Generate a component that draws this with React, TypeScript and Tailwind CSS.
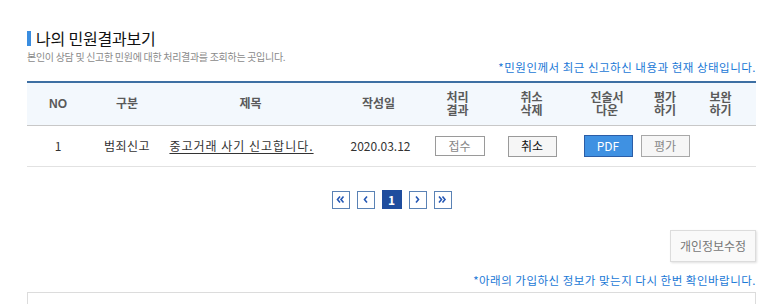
const font = { fontFamily: '"Noto Sans CJK KR", "Noto Sans", sans-serif' };
const headFont = { fontFamily: '"Liberation Sans", "Noto Sans CJK KR", sans-serif' };

type Col = { label: string[] };

const cols: Col[] = [
    { label: ['NO'] },
    { label: ['구분'] },
    { label: ['제목'] },
    { label: ['작성일'] },
    { label: ['처리', '결과'] },
    { label: ['취소', '삭제'] },
    { label: ['진술서', '다운'] },
    { label: ['평가', '하기'] },
    { label: ['보완', '하기'] },
];

const gridCols = 'grid grid-cols-[62px_76px_171px_85px_73px_75px_76px_40px_71px]';

const Chevron = ({ dir, double }: { dir: 'l' | 'r'; double?: boolean }) => {
    const one = dir === 'l' ? 'M5 1.5 L2.5 4.5 L5 7.5' : 'M2 1.5 L4.5 4.5 L2 7.5';
    const two = dir === 'l' ? 'M8.5 1.5 L6 4.5 L8.5 7.5' : 'M5.5 1.5 L8 4.5 L5.5 7.5';
    return (
        <svg width={double ? 11 : 7} height="9" viewBox={double ? '0 0 11 9' : '0 0 7 9'} fill="none" stroke="#2658b5" strokeWidth="1.6">
            <path d={one} />
            {double && <path d={two} />}
        </svg>
    );
};

const PageBox = ({ children, active }: { children: React.ReactNode; active?: boolean }) => (
    <div
        className={
            active
                ? 'flex h-[19px] w-[20px] items-center justify-center bg-[#1f4d9e] text-[12px] font-bold text-white'
                : 'flex h-[18px] w-[18px] items-center justify-center border border-[#5a82b5] bg-white'
        }
    >
        {children}
    </div>
);

const App = () => {
    return (
        <div className="w-[776px] h-[304px] overflow-hidden bg-white" style={font}>
            <div className="ml-[27px] w-[729px] pt-[29px]">
                {/* title */}
                <div className="flex items-center h-[18px]">
                    <div className="w-[4px] h-[15px] bg-[#3a8de0] mr-[5px]" />
                    <h2 className="text-[16px] leading-[18px] text-[#111] tracking-[-0.2px]">나의 민원결과보기</h2>
                </div>
                <p className="mt-[4px] text-[10px] leading-[12px] text-[#8a8a8a] tracking-[-0.3px]">
                    본인이 상담 및 신고한 민원에 대한 처리결과를 조회하는 곳입니다.
                </p>
                <p className="mt-[-3px] text-right text-[11.5px] leading-[14px] text-[#1a78d6] tracking-[0.5px]">
                    *민원인께서 최근 신고하신 내용과 현재 상태입니다.
                </p>

                {/* table */}
                <div className="mt-[7px] border-t-2 border-[#3d6fa3]">
                    <div className={`${gridCols} h-[43px] bg-[#f3f8fd] border-b border-[#c8c8c8]`}>
                        {cols.map((c) => (
                            <div
                                key={c.label.join('')}
                                className="flex flex-col items-center justify-center text-[12px] font-bold leading-[14px] text-[#5a5a5a]"
                                style={headFont}
                            >
                                {c.label.map((l) => (
                                    <span key={l} className="-my-[0.5px]">{l}</span>
                                ))}
                            </div>
                        ))}
                    </div>
                    <div className={`${gridCols} h-[41px] border-b border-[#e2e2e2] text-[12px] text-[#333]`}>
                        <div className="flex items-center justify-center">1</div>
                        <div className="flex items-center justify-center tracking-[0.5px]">범죄신고</div>
                        <div className="flex items-center justify-center pr-[18px]">
                            <span className="underline underline-offset-2 tracking-[1px] whitespace-nowrap">중고거래 사기 신고합니다.</span>
                        </div>
                        <div className="flex items-center justify-center pl-[4px]">2020.03.12</div>
                        <div className="flex items-center justify-center pl-[4px]">
                            <div className="flex h-[20px] w-[50px] items-center justify-center border border-[#9a9a9a] bg-white text-[#888]">접수</div>
                        </div>
                        <div className="flex items-center justify-center pl-[1px]">
                            <div className="flex h-[21px] w-[49px] items-center justify-center border border-[#9a9a9a] bg-[#f6f6f6] text-[#111]">취소</div>
                        </div>
                        <div className="flex items-center justify-center pl-[2px]">
                            <div className="flex h-[22px] w-[49px] items-center justify-center border border-[#2b5da6] bg-[#3f91e2] text-white">PDF</div>
                        </div>
                        <div className="flex items-center justify-center">
                            <div className="flex h-[22px] w-[49px] shrink-0 items-center justify-center border border-[#a8a8a8] bg-[#f6f6f6] text-[#888]">평가</div>
                        </div>
                        <div />
                    </div>
                </div>

                {/* pagination */}
                <div className="mt-[23px] flex items-center justify-center gap-[7px]">
                    <PageBox><Chevron dir="l" double /></PageBox>
                    <PageBox><Chevron dir="l" /></PageBox>
                    <PageBox active>1</PageBox>
                    <PageBox><Chevron dir="r" /></PageBox>
                    <PageBox><Chevron dir="r" double /></PageBox>
                </div>

                {/* edit button */}
                <div className="mt-[21px] flex justify-end">
                    <button className="h-[32px] w-[86px] border border-[#dcdcdc] bg-[#f9f9f9] text-[12px] text-[#777] shadow-[1px_1px_2px_rgba(0,0,0,0.12)]">
                        개인정보수정
                    </button>
                </div>
                <p className="mt-[11px] text-right text-[11.5px] leading-[14px] text-[#1a78d6] tracking-[0.5px]">
                    *아래의 가입하신 정보가 맞는지 다시 한번 확인바랍니다.
                </p>
                <div className="mt-[5px] h-[40px] border border-[#dcdcdc]" />
            </div>
        </div>
    );
};

export default App;
